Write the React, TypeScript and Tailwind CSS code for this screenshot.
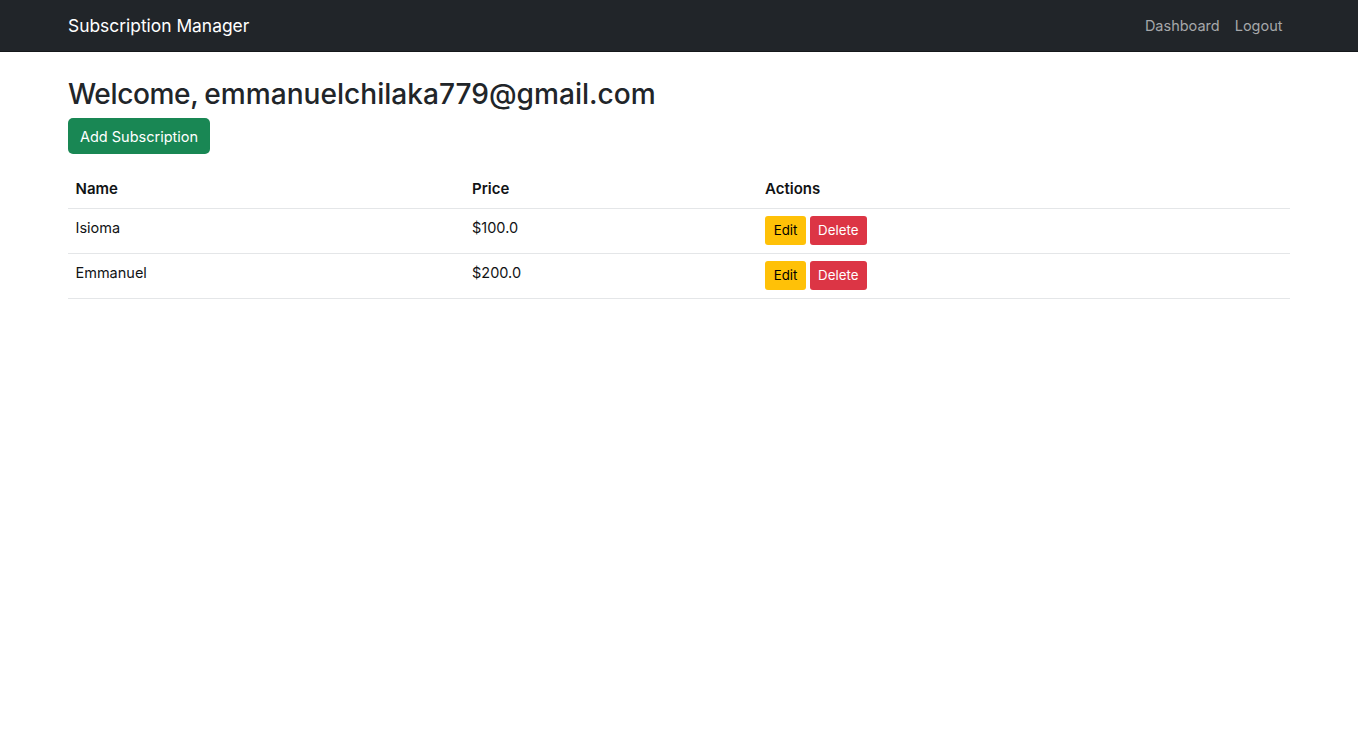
export default function App() {
  return (
    <div className="min-h-[733px] bg-white text-[#212529] font-['Inter','Liberation_Sans',sans-serif]">
      <nav className="h-[52px] bg-[#212529] border-b border-[#15181b] px-[68px] flex items-center justify-between">
        <span className="pt-[2px] text-[17.4px] text-white">Subscription Manager</span>
        <div className="flex gap-[15px] pt-[1px] pr-[7.5px] text-[14.5px] text-[#a6a8aa]">
          <span>Dashboard</span>
          <span>Logout</span>
        </div>
      </nav>
      <main className="px-[68px] pt-[20px]">
        <h1 className="text-[28.1px] leading-[44px] font-medium [word-spacing:-1.5px]">
          <span className="tracking-[-0.4px]">Welcome,</span> emmanuelchilaka779@gmail.com
        </h1>
        <button className="mt-[2px] h-[36px] w-[142px] pt-[1px] rounded-[5px] bg-[#198754] text-white text-[14.5px]">Add Subscription</button>
        <table className="mt-[16px] w-full text-[14.5px] text-left text-[#111315] border-collapse">
          <thead>
            <tr className="h-[38px] border-b border-[#e4e6e8]">
              <th className="w-[396.5px] px-[7.5px] text-[15px] font-semibold">Name</th>
              <th className="w-[293.5px] px-[7.5px] text-[15px] font-semibold">Price</th>
              <th className="px-[7px] text-[15px] font-semibold">Actions</th>
            </tr>
          </thead>
          <tbody>
            {[["Isioma", "$100.0"], ["Emmanuel", "$200.0"]].map(([name, price]) => (
              <tr key={name} className="h-[45px] border-b border-[#e4e6e8]">
                <td className="px-[7.5px] pb-[6px]">{name}</td>
                <td className="px-[7.5px] pb-[6px]">{price}</td>
                <td className="px-[7px]">
                  <div className="flex gap-[4px]">
                    <button className="h-[29px] w-[41px] rounded-[3px] bg-[#ffc107] text-black text-[13.3px]">Edit</button>
                    <button className="h-[29px] w-[56.5px] rounded-[3px] bg-[#dc3545] text-white text-[13.3px]">Delete</button>
                  </div>
                </td>
              </tr>
            ))}
          </tbody>
        </table>
      </main>
    </div>
  );
}
